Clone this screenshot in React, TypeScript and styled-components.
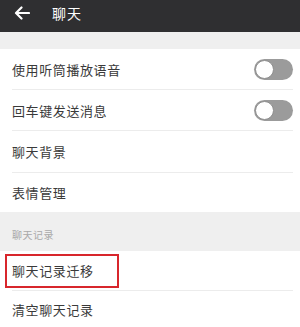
import React, { FC } from "react";
import styled, { createGlobalStyle } from "styled-components";

const GlobalStyle = createGlobalStyle`
  html, body {
    margin: 0;
    padding: 0;
    background: #ffffff;
  }
  body {
    font-family: "Noto Sans CJK SC", "Noto Sans", sans-serif;
  }
`;

const StyledPage = styled.div`
  width: 300px;
  height: 327px;
  overflow: hidden;
  background: #ffffff;
`;

const StyledHeader = styled.div`
  display: flex;
  align-items: center;
  height: 32px;
  background: #2f2f31;
  color: #ffffff;
`;

const StyledBack = styled.div`
  display: flex;
  align-items: center;
  justify-content: center;
  width: 40px;
  height: 32px;
  margin-right: 12px;
`;

const StyledTitle = styled.div`
  font-size: 14px;
  letter-spacing: 1px;
  line-height: 1;
  margin-top: -6px;
`;

const StyledGap = styled.div<{ $height: number }>`
  height: ${(p) => p.$height}px;
  background: #efefef;
`;

const StyledSectionLabel = styled.div`
  display: flex;
  align-items: flex-end;
  height: 39px;
  padding: 0 12px 9px;
  box-sizing: border-box;
  background: #efefef;
  color: #a9a9a9;
  font-size: 10px;
  letter-spacing: 0.5px;
`;

const StyledRow = styled.div<{ $divider?: boolean; $height?: number }>`
  display: flex;
  align-items: center;
  justify-content: space-between;
  height: ${(p) => p.$height ?? 40}px;
  margin-left: 12px;
  margin-right: 7px;
  border-bottom: ${(p) => (p.$divider ? "1px solid #ececec" : "none")};
  color: #3a3a3a;
  font-size: 13px;
  letter-spacing: 0.6px;
`;

const StyledHighlight = styled.div`
  display: flex;
  align-items: center;
  box-sizing: border-box;
  width: 114px;
  height: 34px;
  margin-left: -7px;
  padding-left: 5px;
  border: 2px solid #d8262c;
`;

const StyledToggle = styled.div`
  display: flex;
  align-items: center;
  box-sizing: border-box;
  width: 39px;
  height: 21px;
  border-radius: 11px;
  background: #9b9b9b;
  padding: 1px;
`;

const StyledKnob = styled.div`
  width: 19px;
  height: 19px;
  border-radius: 50%;
  background: #ffffff;
  box-sizing: border-box;
  border: 1px solid #8e8e8e;
`;

const Toggle: FC = () => (
  <StyledToggle>
    <StyledKnob />
  </StyledToggle>
);

const ChatSettings: FC = () => {
  return (
    <StyledPage>
      <GlobalStyle />
      <StyledHeader>
        <StyledBack>
          <svg width="16" height="14" viewBox="0 0 16 14" fill="none" style={{ marginTop: -6, marginLeft: 4 }}>
            <path d="M15 7H2.5M7.5 1.5L2 7l5.5 5.5" stroke="#fff" strokeWidth="2.2" strokeLinecap="round" strokeLinejoin="round" />
          </svg>
        </StyledBack>
        <StyledTitle>聊天</StyledTitle>
      </StyledHeader>
      <StyledGap $height={17} />
      <StyledRow $divider $height={40}>
        使用听筒播放语音
        <Toggle />
      </StyledRow>
      <StyledRow $divider $height={40}>
        回车键发送消息
        <Toggle />
      </StyledRow>
      <StyledRow $divider $height={41}>聊天背景</StyledRow>
      <StyledRow $height={39}>表情管理</StyledRow>
      <StyledSectionLabel>聊天记录</StyledSectionLabel>
      <StyledRow $divider $height={39}>
        <StyledHighlight>聊天记录迁移</StyledHighlight>
      </StyledRow>
      <StyledRow $height={37}>清空聊天记录</StyledRow>
    </StyledPage>
  );
};

export default ChatSettings;
